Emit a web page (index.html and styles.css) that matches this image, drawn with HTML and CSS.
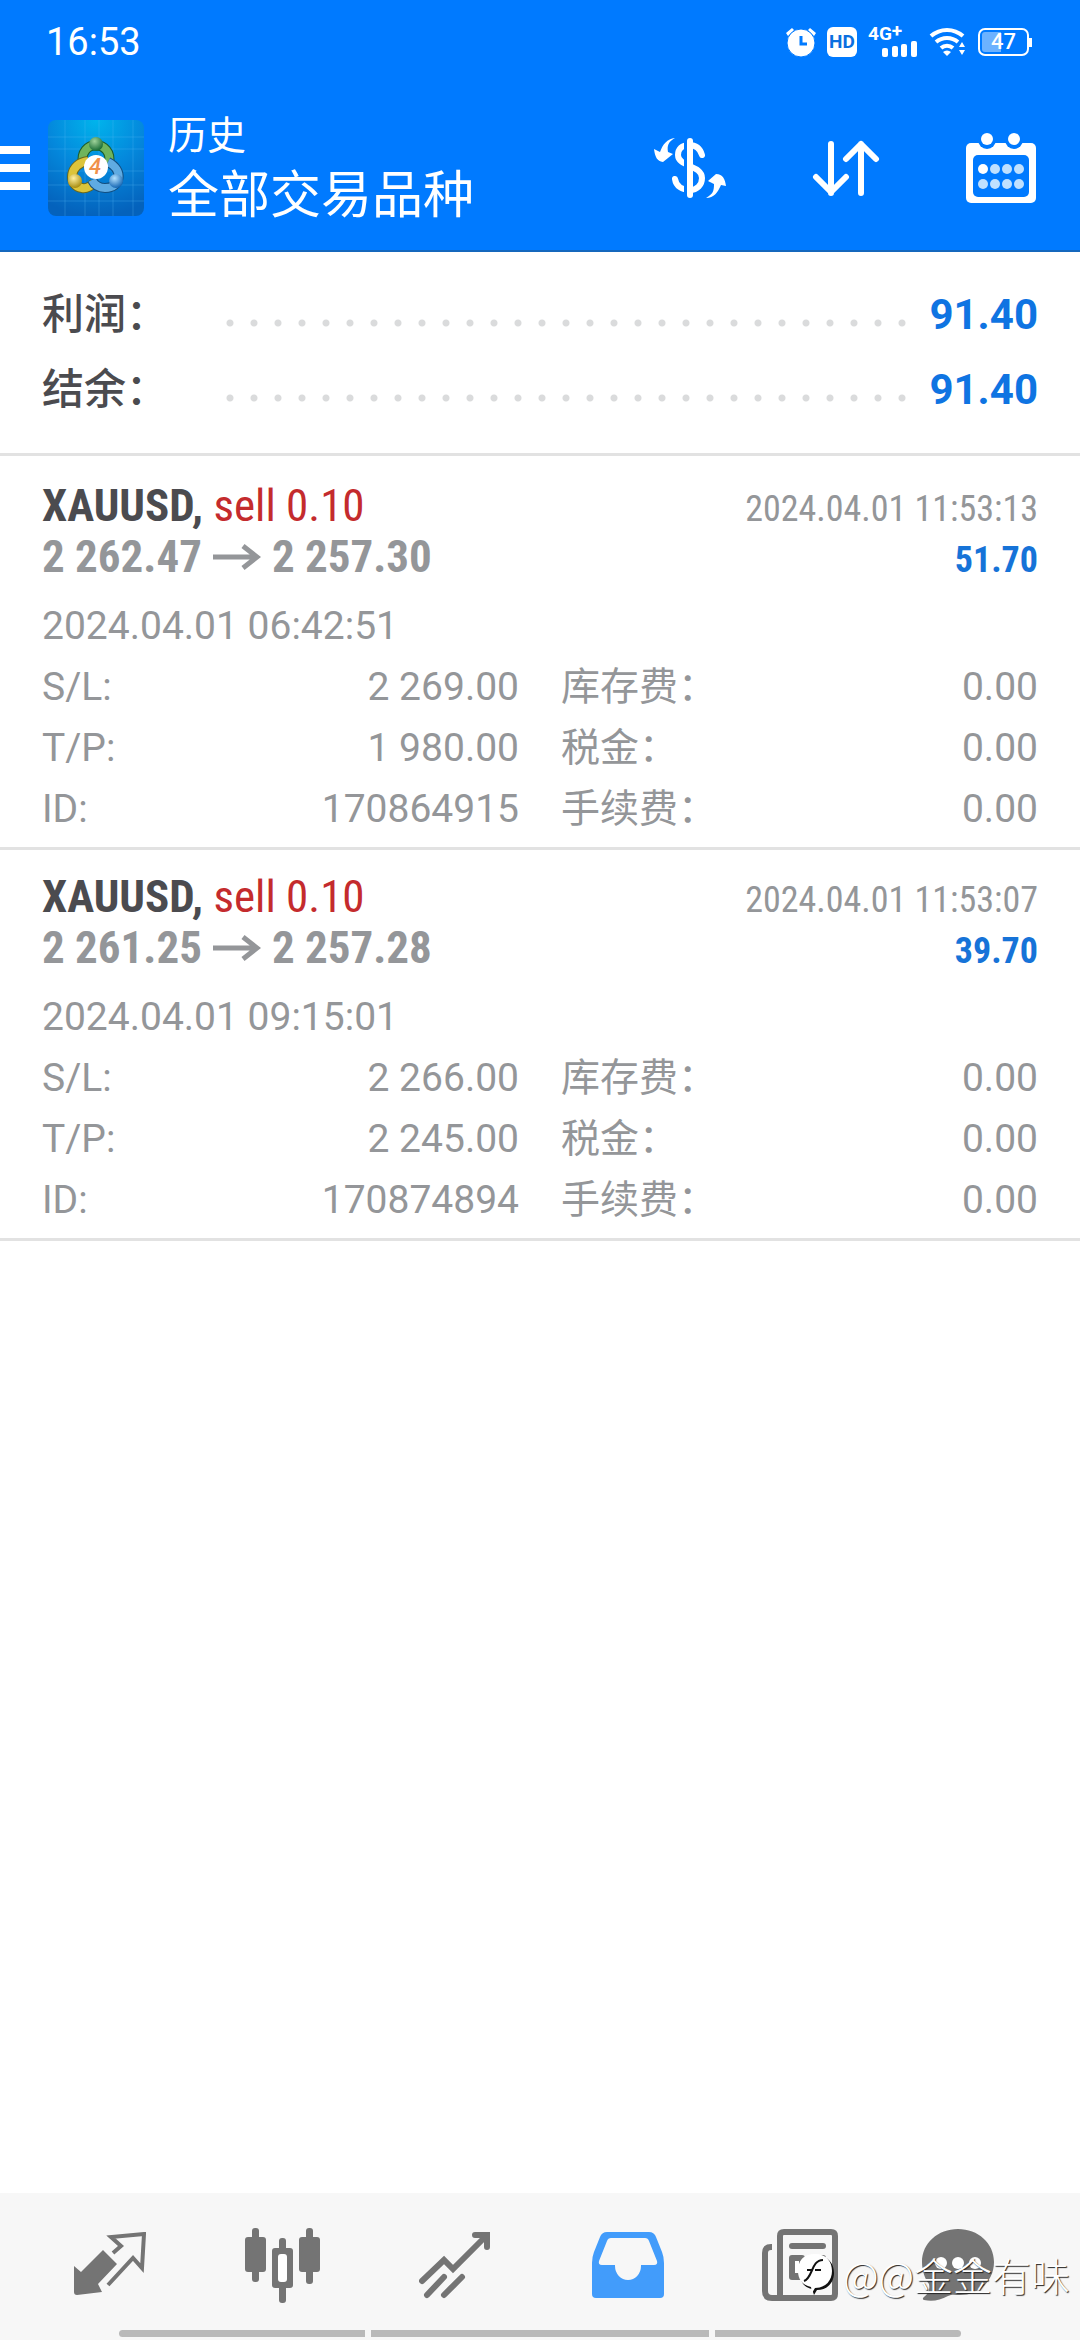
FILE: index.html
```html
<!DOCTYPE html>
<html lang="zh-CN">
<head>
<meta charset="utf-8">
<meta name="viewport" content="width=device-width, initial-scale=1">
<title>历史</title>
<link rel="stylesheet" href="styles.css">
</head>
<body>
<header class="top">
  <div class="status">
    <time class="clock">16:53</time>
    <div class="status-icons">
      <svg width="30" height="30" viewBox="0 0 30 30" fill="#fff"><path d="M0 6l6-5 2 2-6 6zM30 6l-6-5-2 2 6 6z"/><circle cx="15" cy="16" r="14" stroke="#007aff" stroke-width="1"/><path d="M15 9v8h6" fill="none" stroke="#007aff" stroke-width="3"/></svg>
      <span class="hd">HD</span>
      <span class="cell">
        <span class="net">4G<sup class="plus">+</sup></span>
        <svg class="bars" width="36" height="16" viewBox="0 0 36 16" fill="#fff"><rect y="7" width="6" height="9" rx="2"/><rect x="10" y="5" width="6" height="11" rx="2"/><rect x="19" y="3" width="6" height="13" rx="2"/><rect x="29" width="6" height="16" rx="2"/></svg>
      </span>
      <svg width="38" height="30" viewBox="0 0 38 30" fill="none" stroke="#fff" stroke-width="4"><path d="M2 9a24 24 0 0 1 32 0M7 15a17 17 0 0 1 22 0M12 21a9 9 0 0 1 12 0"/><path d="M14 25a6 6 0 0 1 8 0l-4 4zM30 20l3-5 3 5zM30 23h6l-3 5z" fill="#fff" stroke="none"/></svg>
      <span class="battery"><span class="battery-box">47</span></span>
    </div>
  </div>
  <div class="bar">
    <button class="menu" aria-label="菜单"><svg width="30" height="44" viewBox="0 0 30 44" fill="#fff"><path d="M0 0h30v8H0zM0 18h30v8H0zM0 36h30v8H0z"/></svg></button>
    <svg class="logo" width="96" height="96" viewBox="0 0 96 96">
      <defs>
        <radialGradient id="bg" cx=".5" cy="0" r="1"><stop offset="0" stop-color="#00b4ec"/><stop offset=".5" stop-color="#0488dc"/><stop offset="1" stop-color="#0462bc"/></radialGradient>
        <radialGradient id="g" cx=".4" cy=".3" r=".7"><stop offset="0" stop-color="#9fd39a"/><stop offset="1" stop-color="#176a34"/></radialGradient>
        <radialGradient id="y" cx=".4" cy=".3" r=".7"><stop offset="0" stop-color="#fff0a0"/><stop offset="1" stop-color="#a88d10"/></radialGradient>
        <radialGradient id="b" cx=".4" cy=".3" r=".7"><stop offset="0" stop-color="#b4e2ff"/><stop offset="1" stop-color="#1466b4"/></radialGradient>
      </defs>
      <rect width="96" height="96" rx="8" fill="url(#bg)"/>
      <path d="M17 0v96M37 0v96M51 0v96M65 0v96M85 0v96M0 17h96M0 29h96M0 51h96M0 65h96M0 81h96" stroke="#5cc0f4" stroke-opacity=".28"/>
      <g fill="none">
        <path d="M35 44c-5-25 31-25 26 0" stroke="#1d5c2c" stroke-width="10"/><path d="M35 44c-5-25 31-25 26 0" stroke="#6fb45c" stroke-width="8"/>
        <path d="M40 41c-19 2-21 25-6 27 5 1 8-1 12-5" stroke="#6a681c" stroke-width="10"/><path d="M40 41c-19 2-21 25-6 27 5 1 8-1 12-5" stroke="#dcc43a" stroke-width="8"/>
        <path d="M60 42c16 8 13 26-3 26-7 0-11-4-13-8" stroke="#124e80" stroke-width="10"/><path d="M60 42c16 8 13 26-3 26-7 0-11-4-13-8" stroke="#5fabe2" stroke-width="8"/>
      </g>
      <circle cx="48" cy="24" r="7" fill="url(#g)"/><circle cx="27" cy="61" r="7" fill="url(#y)"/><circle cx="68" cy="61" r="7" fill="url(#b)"/>
      <circle cx="48" cy="47" r="12" fill="#fff"/>
      <text x="47" y="54" class="logo-num" text-anchor="middle">4</text>
    </svg>
    <div class="titles">
      <div class="subtitle">历史</div>
      <h1 class="title">全部交易品种</h1>
    </div>
    <div class="actions">
      <button class="action" aria-label="货币"><svg width="72" height="62" viewBox="0 0 72 62"><path d="M48 18c-2-7-7-10-13-10-7 0-11 4-11 10 0 12 24 10 24 23 0 7-5 12-12 12-8 0-14-4-15-11" fill="none" stroke="#fff" stroke-width="6" stroke-linecap="round"/><path d="M32 2v58" stroke="#007aff" stroke-width="4"/><path d="M36 4v54" stroke="#fff" stroke-width="6" stroke-linecap="round"/><path d="M21 1C14 5 13 9 14 15l5 2-10 8C3 24 1 20 0 12l6 3C9 7 13 2 21 1zM52 61c7-4 8-7 8-14l-6-3 8-7c7 0 9 5 10 12l-5-1c-3 7-7 13-15 13z" fill="#fff"/></svg></button>
      <button class="action" aria-label="排序"><svg width="68" height="58" viewBox="0 0 68 58" fill="none" stroke="#fff" stroke-width="6" stroke-linecap="round" stroke-linejoin="round"><path d="M19 5v49M4 38l15 15 15-15M49 54V5M34 20L49 5l15 15"/></svg></button>
      <button class="action" aria-label="日期"><svg width="70" height="70" viewBox="0 0 70 70"><rect y="10" width="70" height="60" rx="5" fill="#fff"/><rect x="7" y="22" width="56" height="42" rx="5" fill="#007aff"/><circle cx="21" cy="7" r="9" fill="#007aff"/><circle cx="48" cy="7" r="9" fill="#007aff"/><circle cx="21" cy="6" r="6" fill="#fff"/><circle cx="48" cy="6" r="6" fill="#fff"/><g fill="#bfe0ff"><circle cx="17" cy="36" r="5" fill="#fff"/><circle cx="29" cy="36" r="5"/><circle cx="41" cy="36" r="5"/><circle cx="53" cy="36" r="5"/><circle cx="17" cy="51" r="5"/><circle cx="29" cy="51" r="5"/><circle cx="41" cy="51" r="5"/><circle cx="53" cy="51" r="5"/></g></svg></button>
    </div>
  </div>
</header>
<main class="content">
  <dl class="summary">
    <div class="sum-row"><dt>利润：</dt><dd>91.40</dd></div>
    <div class="sum-row"><dt>结余：</dt><dd>91.40</dd></div>
  </dl>
  <article class="deal">
    <div class="line"><h2 class="symbol">XAUUSD, <span class="side">sell 0.10</span></h2><time class="closed">2024.04.01 11:53:13</time></div>
    <div class="line"><div class="prices">2 262.47<svg width="48" height="26" viewBox="0 0 48 26" fill="none" stroke="#949699" stroke-width="5"><path d="M0 13h44M30 2l14 11-14 11"/></svg>2 257.30</div><div class="profit">51.70</div></div>
    <time class="opened">2024.04.01 06:42:51</time>
    <dl class="details">
      <div><dt>S/L:</dt><dd>2 269.00</dd></div><div><dt>库存费：</dt><dd>0.00</dd></div>
      <div><dt>T/P:</dt><dd>1 980.00</dd></div><div><dt>税金：</dt><dd>0.00</dd></div>
      <div><dt>ID:</dt><dd>170864915</dd></div><div><dt>手续费：</dt><dd>0.00</dd></div>
    </dl>
  </article>
  <article class="deal">
    <div class="line"><h2 class="symbol">XAUUSD, <span class="side">sell 0.10</span></h2><time class="closed">2024.04.01 11:53:07</time></div>
    <div class="line"><div class="prices">2 261.25<svg width="48" height="26" viewBox="0 0 48 26" fill="none" stroke="#949699" stroke-width="5"><path d="M0 13h44M30 2l14 11-14 11"/></svg>2 257.28</div><div class="profit">39.70</div></div>
    <time class="opened">2024.04.01 09:15:01</time>
    <dl class="details">
      <div><dt>S/L:</dt><dd>2 266.00</dd></div><div><dt>库存费：</dt><dd>0.00</dd></div>
      <div><dt>T/P:</dt><dd>2 245.00</dd></div><div><dt>税金：</dt><dd>0.00</dd></div>
      <div><dt>ID:</dt><dd>170874894</dd></div><div><dt>手续费：</dt><dd>0.00</dd></div>
    </dl>
  </article>
</main>
<footer class="bottom">
  <nav class="tabs">
    <a class="tab" href="#quotes" aria-label="行情"><svg width="72" height="66" viewBox="0 0 72 66"><path d="M29 18l14 14-19 20 4 8-25 3q-3 0-3-3V34l7 6z" fill="#747474"/><path d="M39 21l8-7-10-9 33-3-2 34-9-10-25 27" fill="none" stroke="#747474" stroke-width="4"/></svg></a>
    <a class="tab" href="#chart" aria-label="图表"><svg width="76" height="76" viewBox="0 0 76 76" fill="#747474"><rect y="10" width="21" height="35" rx="3"/><rect x="7" y="1" width="7" height="54" rx="3"/><rect x="54" y="10" width="21" height="35" rx="3"/><rect x="61" y="1" width="7" height="56" rx="3"/><rect x="27" y="21" width="21" height="40" rx="3"/><rect x="34" y="11" width="7" height="65" rx="3"/><rect x="33" y="27" width="9" height="28" rx="3" fill="#fff"/></svg></a>
    <a class="tab" href="#trade" aria-label="交易"><svg width="72" height="68" viewBox="0 0 72 68" fill="none" stroke="#747474" stroke-width="6" stroke-linecap="round"><path d="M3 50l22-21 9 9L67 5M56 4h12v12M8 64l17-18M25 64l18-18"/></svg></a>
    <a class="tab" href="#history" aria-label="历史" aria-current="page"><svg width="72" height="66" viewBox="0 0 72 66"><path d="M15 0h42q5 0 7 5l6 15q2 5 2 11v31q0 4-4 4H4q-4 0-4-4V31q0-6 2-11L8 5q2-5 7-5z" fill="#429cfb"/><path d="M19 6h34q3 0 4 3l8 20q1 4-3 4H49v1a13 14 0 0 1-26 0v-1H10q-4 0-3-4l8-20q1-3 4-3z" fill="#f7f7f7"/></svg></a>
    <a class="tab" href="#news" aria-label="新闻"><svg width="76" height="72" viewBox="0 0 76 72"><g fill="none" stroke="#747474" stroke-width="6"><path d="M10 18H9q-6 0-6 6v38q0 7 7 7h59q4 0 4-4V7q0-4-4-4H22q-4 0-4 4v62"/></g><g fill="#747474"><rect x="27" y="14" width="37" height="6" rx="3"/><rect x="27" y="26" width="16" height="25" rx="3"/><rect x="48" y="26" width="16" height="6" rx="3"/><rect x="48" y="38" width="16" height="6" rx="3"/></g><path d="M35 32v12" stroke="#fff" stroke-width="4"/></svg></a>
    <a class="tab" href="#chat" aria-label="聊天"><svg width="72" height="72" viewBox="0 0 72 72"><path d="M36 0c20 0 36 14 36 33S57 66 38 66c-5 0-8-1-12 1-8 4-15 6-24 4-2-1-1-2 0-3 5-4 6-8 5-13C3 50 0 42 0 33 0 14 16 0 36 0z" fill="#747474"/><g fill="#fff"><circle cx="19" cy="34" r="6"/><circle cx="36" cy="34" r="6"/><circle cx="53" cy="34" r="6"/></g></svg></a>
  </nav>
  <div class="gesture"><span></span><span></span><span></span></div>
  <div class="watermark">
    <svg width="40" height="42" viewBox="0 0 40 42"><path d="M20 3c12 0 17 8 17 17s-6 17-17 17l-3 5-2-6C6 34 3 28 3 20 3 10 8 3 20 3z" fill="#111"/><path d="M18 1c12 0 17 8 17 17s-6 17-17 17l-3 5-1-6C5 32 1 26 1 18 1 8 6 1 18 1z" fill="#fff"/><path d="M7 28c9-3 7-21 19-21M10 17h5M18 17h6" fill="none" stroke="#111" stroke-width="2"/></svg>
    <span>@@金金有味</span>
  </div>
</footer>
</body>
</html>
```
FILE: styles.css
```css
* { box-sizing: border-box; margin: 0; padding: 0; }

body {
  display: flex;
  flex-direction: column;
  min-height: 100vh;
  background: #fff;
  color: #949699;
  font-family: Roboto, "Noto Sans CJK SC", sans-serif;
  font-size: 39px;
  line-height: 60px;
}

svg { display: block; flex: none; }
button { border: 0; background: none; color: inherit; font: inherit; }

/* Header */
.top { background: #007aff; color: #fff; border-bottom: 2px solid #1568bd; }
.status { display: flex; justify-content: space-between; align-items: center; height: 84px; padding: 0 48px 0 46px; }
.clock { font-size: 38px; }
.status-icons { display: flex; align-items: center; gap: 11px; }
.hd { width: 30px; border-radius: 6px; background: #fff; color: #0a6fe0; font-size: 19px; font-weight: 700; line-height: 30px; text-align: center; }
.cell { display: flex; flex-direction: column; width: 50px; height: 30px; }
.net { display: flex; font-size: 19px; font-weight: 700; line-height: 14px; }
.plus { font-size: 19px; line-height: 8px; }
.bars { align-self: flex-end; }
.battery { display: flex; align-items: center; }
.battery::after { content: ""; width: 3px; height: 9px; background: #fff; }
.battery-box { width: 51px; border: 2px solid #fff; border-radius: 7px; background: linear-gradient(90deg, #6cb2ff 45%, #007aff 45%) content-box; padding: 2px; font-size: 22px; font-weight: 500; line-height: 20px; text-align: center; }

.bar { display: flex; align-items: center; height: 166px; padding-top: 2px; }
.menu { width: 48px; }
.titles { flex: 1; margin-left: 24px; padding-top: 2px; }
.subtitle { font-size: 39px; line-height: 54px; }
.title { font-size: 51px; font-weight: 400; line-height: 66px; }
.actions { display: flex; gap: 86px; padding-right: 44px; align-items: center; }
.logo-num { fill: #f0914a; font-size: 22px; font-weight: 500; font-style: italic; }

/* Totals */
.content { flex: 1; }
.summary { margin-bottom: 3px; padding: 25px 42px 26px; border-bottom: 3px solid #e2e2e2; }
.sum-row { display: flex; align-items: center; font-size: 42px; line-height: 75px; }
.sum-row dt { width: 176px; color: #4b4b4f; font-weight: 500; }
.sum-row dd { display: flex; flex: 1; color: #0f74e2; font-weight: 700; }
.sum-row dd::before { content: ""; flex: 1; margin-right: 16px; background: radial-gradient(circle at 12px 46px, #dadbdc 3px, transparent 4px) 0 0 / 24px 75px; }

/* Deals */
.deal { padding: 23px 42px 7px; border-bottom: 3px solid #e2e2e2; }
.line { display: flex; justify-content: space-between; align-items: baseline; font-family: "Roboto Condensed", "Liberation Sans Narrow", Roboto, sans-serif; font-size: 36px; line-height: 48px; }
.symbol { color: #4b4b4f; font-size: 45px; font-weight: 700; }
.side { color: #c42b2d; font-weight: 400; }
.prices { display: flex; align-items: center; gap: 11px; font-size: 45px; font-weight: 700; }
.profit { color: #1673d8; font-weight: 700; }
.opened { display: block; margin-top: 12px; line-height: 61px; }
.details { display: grid; grid-template-columns: 1fr 1fr; column-gap: 42px; line-height: 61px; }
.details div { display: flex; justify-content: space-between; }

/* Bottom tabs */
.bottom { position: sticky; bottom: 0; background: #f7f7f7; }
.tabs { display: grid; grid-template-columns: repeat(5, 6fr) 5fr; height: 137px; padding: 8px 50px 0 24px; }
.tab { display: flex; justify-content: center; align-items: center; padding-bottom: 1px; }
.gesture { display: grid; grid-template-columns: 245fr 338fr 245fr; gap: 6px; width: 78%; margin: 0 auto; padding-bottom: 3px; }
.gesture span { height: 7px; background: #b9b9b9; }
.gesture span:first-child { border-radius: 4px 0 0 4px; }
.gesture span:last-child { border-radius: 0 4px 4px 0; }
.watermark { position: absolute; right: 10px; bottom: 42px; display: flex; align-items: center; gap: 6px; color: #fff; font-family: "Noto Sans CJK SC", sans-serif; font-size: 39px; font-weight: 300; line-height: 48px; text-shadow: 1px 1px 1px #222; }
```
